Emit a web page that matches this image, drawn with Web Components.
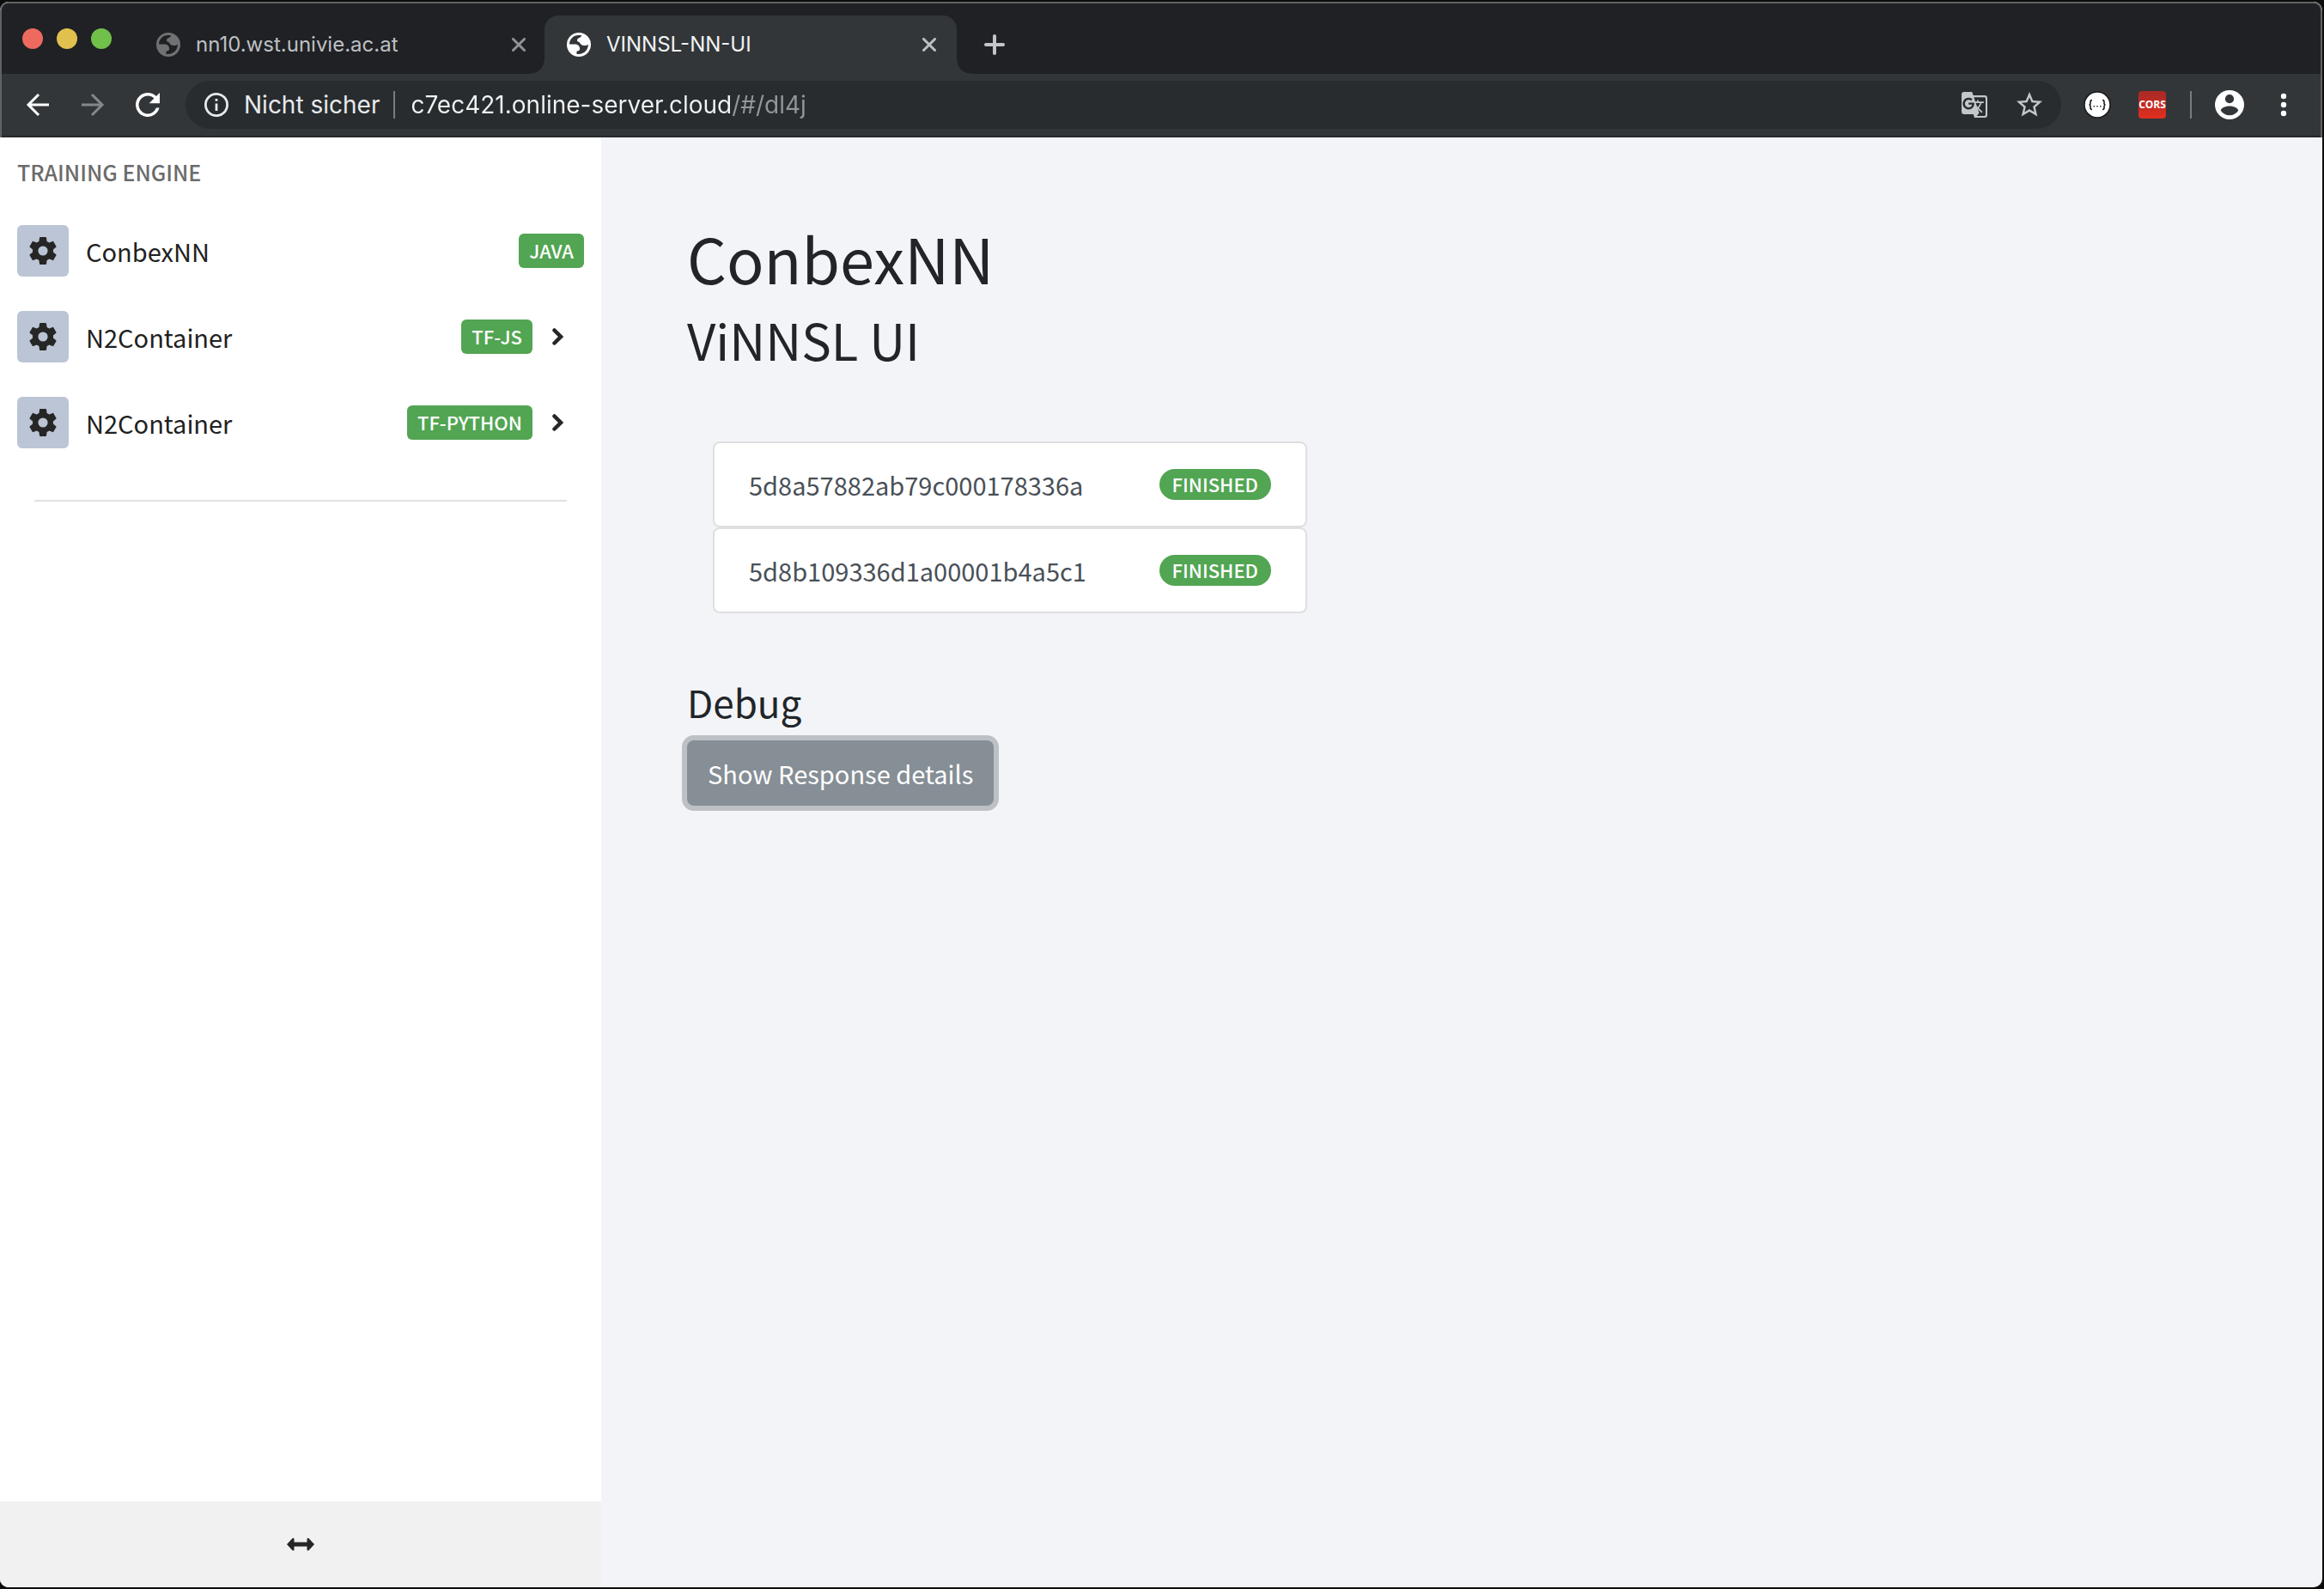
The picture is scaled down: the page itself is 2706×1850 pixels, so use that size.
<!DOCTYPE html>
<html lang="de">
<head>
<meta charset="utf-8">
<title>VINNSL-NN-UI</title>
<style>
  html, body { height: 100%; }
  body { margin: 0; background: #0c0c0c; font-family: "Noto Sans CJK SC", "Noto Sans", sans-serif; color: #212529; }
</style>
</head>
<body>
<browser-window>
  <tab-strip slot="tabs">
    <browser-tab>nn10.wst.univie.ac.at</browser-tab>
    <browser-tab active>VINNSL-NN-UI</browser-tab>
  </tab-strip>
  <tool-bar slot="toolbar"></tool-bar>
  <side-bar>
    <engine-item badge="JAVA">ConbexNN</engine-item>
    <engine-item badge="TF-JS" more>N2Container</engine-item>
    <engine-item badge="TF-PYTHON" more>N2Container</engine-item>
  </side-bar>
  <main-view>
    <job-card status="FINISHED">5d8a57882ab79c000178336a</job-card>
    <job-card status="FINISHED">5d8b109336d1a00001b4a5c1</job-card>
  </main-view>
</browser-window>
<script>
const base = `:host,*{box-sizing:border-box}button{font:inherit;color:inherit;background:none;border:0;padding:0;margin:0;display:grid;place-items:center;flex:none}svg{display:block;flex:none}a{color:inherit;text-decoration:none}`;
function define(name, render) {
  customElements.define(name, class extends HTMLElement {
    connectedCallback() {
      if (this.shadowRoot) return;
      const t = document.createElement('template');
      t.innerHTML = render(this);
      this.attachShadow({ mode: 'open' }).append(t.content.cloneNode(true));
    }
  });
}

define('browser-window', () => `<style>${base}
:host{display:block;height:100%;padding:2px 2px 2px 0}
.frame{height:100%;display:flex;flex-direction:column;border-radius:10px;overflow:hidden;background:#f3f4f8}
.chrome{background:#202124;border:solid #606163;border-width:2px 2px 0 2px;border-radius:10px 10px 0 0}
.page{flex:1;min-height:0;display:flex}
</style><div class="frame"><div class="chrome"><slot name="tabs"></slot><slot name="toolbar"></slot></div><div class="page"><slot></slot></div></div>`);

define('tab-strip', () => `<style>${base}
:host{display:flex;align-items:flex-end;height:82px;padding-left:20px;font-family:Inter,sans-serif}
.lights{display:flex;gap:16px;align-self:flex-start;padding:29px 4px 0}
.lights button{width:24px;height:24px;border-radius:50%}
.tabs{display:flex;padding-left:22px}
.add{width:56px;height:68px;margin-left:16px}
</style><div class="lights"><button aria-label="Close window" style="background:#ee695e"></button><button aria-label="Minimise window" style="background:#e2c04e"></button><button aria-label="Zoom window" style="background:#71c04a"></button></div>
<div class="tabs" role="tablist"><slot></slot></div>
<button class="add" aria-label="New tab"><svg width="24" height="24" viewBox="0 0 24 24" stroke="#c3c5c8" stroke-width="4" stroke-linecap="round"><path d="M12 2v20M2 12h20"/></svg></button>`);

define('browser-tab', el => `<style>${base}
:host{display:block;width:480px;font-size:24px;line-height:32px;color:#bdc0c4;position:relative}
:host([active]){color:#f1f3f4;margin-left:-2px}
.tab{height:68px;display:flex;align-items:center;padding:0 24px 0 26px;border-radius:16px 16px 0 0}
:host([active]) .tab{background:#323639}
.title{flex:1;min-width:0;padding-left:18px;white-space:nowrap}
.globe{color:#6f7173}:host([active]) .globe{color:#fff}
.close{color:#909295}:host([active]) .close{color:#bdc0c3}
:host([active])::before,:host([active])::after{content:"";position:absolute;bottom:0;width:16px;height:16px}
:host([active])::before{right:100%;background:radial-gradient(circle at 0 0,#202124 15px,#323639 16px)}
:host([active])::after{left:100%;background:radial-gradient(circle at 100% 0,#202124 15px,#323639 16px)}
</style><div class="tab" role="tab"><svg class="globe" width="28" height="28" viewBox="0 0 28 28" fill="currentColor" fill-rule="evenodd"><path d="M14 0a14 14 0 1 0 0 28 14 14 0 0 0 0-28zM3 13.500C3 8 7.500 3 13.500 3H17C17 6.500 12 5.500 12 9C12 11.500 15 10 15.500 12.500C16.500 14.500 19 15 20.500 15C22.500 15 24 14.500 25 13.500C25 20 20 25 14 25H11.500V21.500C14.500 21.500 15.500 20 15 18C14.500 14.500 12 13.500 9.500 13.500Z"/></svg>
<span class="title"><slot></slot></span><button class="close" aria-label="Close tab"><svg width="16" height="16" viewBox="0 0 16 16" stroke="currentColor" stroke-width="3" stroke-linecap="round"><path d="M1.500 1.500l13 13M14.500 1.500l-13 13"/></svg></button></div>`);

define('tool-bar', () => `<style>${base}
:host{display:flex;align-items:center;height:74px;padding:0 26px 0 18px;background:#323639;border-bottom:2px solid #26282b;font-family:Inter,sans-serif;font-size:28px;line-height:36px;color:#e8eaed}
.nav{display:flex;gap:16px}.nav button{width:48px;height:48px;color:#fff}.nav .off{color:#85888b}
.box{flex:1;display:flex;align-items:center;height:56px;margin-left:20px;padding:0 22px;border-radius:28px;background:#282c2f}
.sec{display:flex;align-items:center;gap:18px;margin-right:16px;white-space:nowrap}
.bar{width:2px;height:32px;background:#797c7f}
input{flex:1;min-width:0;margin:0 0 0 18px;padding:0;border:0;outline:0;height:40px;font:inherit;color:#f1f3f4;background:linear-gradient(90deg,#f1f3f4 375px,#93979b 0);-webkit-background-clip:text;background-clip:text;-webkit-text-fill-color:transparent}
.in{display:flex;gap:34px}
.ext{display:flex;align-items:center;padding-left:26px}
.cors{width:32px;height:32px;margin:0 28px 0 32px;border-radius:4px;background:linear-gradient(#a92a25,#c52a24 50%,#e0301f);color:#fff;font:700 12px/32px "Open Sans",sans-serif}
.user{margin:0 29px 0 27px}
</style>
<div class="nav"><button aria-label="Back"><svg width="28" height="28" viewBox="0 0 28 28" fill="none" stroke="currentColor" stroke-width="3"><path d="M27 14H3M15 2L3 14l12 12"/></svg></button>
<button class="off" aria-label="Forward"><svg width="28" height="28" viewBox="0 0 28 28" fill="none" stroke="currentColor" stroke-width="3"><path d="M1 14h24M13 2l12 12-12 12"/></svg></button>
<button aria-label="Reload"><svg width="28" height="28" viewBox="4 4 16 16" fill="currentColor"><path d="M17.650 6.350A7.960 7.960 0 0 0 12 4a8 8 0 1 0 7.730 10h-2.080A6 6 0 1 1 12 6c1.660 0 3.140.690 4.220 1.780L13 11h7V4l-2.350 2.350z"/></svg></button></div>
<div class="box"><div class="sec"><svg width="28" height="28" viewBox="2 2 20 20" fill="currentColor"><path d="M11 7h2v2h-2zm0 4h2v6h-2zm1-9a10 10 0 1 0 0 20 10 10 0 0 0 0-20zm0 18a8 8 0 1 1 0-16 8 8 0 0 1 0 16z"/></svg><span>Nicht sicher</span></div><i class="bar"></i>
<input type="text" aria-label="Adresse" value="c7ec421.online-server.cloud/#/dl4j">
<div class="in"><button aria-label="Translate"><svg width="30" height="30" viewBox="1 1 22 22" fill="#c4c7ca"><path d="M21 4H11l-1-3H3c-1.100 0-2 .9-2 2v15c0 1.100.9 2 2 2h8l1 3h9c1.100 0 2-.9 2-2V6c0-1.100-.9-2-2-2zM7 16c-2.760 0-5-2.240-5-5s2.240-5 5-5c1.350 0 2.480.5 3.350 1.300L9.030 8.570c-.38-.36-1.040-.78-2.030-.78-1.740 0-3.150 1.440-3.150 3.210S5.260 14.210 7 14.210c2.010 0 2.840-1.440 2.920-2.410H7v-1.710h4.680c.07.31.12.61.12 1.020C11.800 13.970 9.890 16 7 16zm6.170-5.420h3.700c-.43 1.250-1.110 2.430-2.050 3.470-.31-.35-.6-.72-.86-1.100l-.79-2.370zm8.330 9.920c0 .55-.45 1-1 1H14l2-2.500-1.040-3.100 3.100 3.100.92-.92-3.300-3.250.02-.02c1.130-1.250 1.930-2.690 2.400-4.220H20v-1.300h-4.530V8h-1.290v1.290h-1.440L11.460 5.500h9.040c.55 0 1 .45 1 1v14z"/></svg></button>
<button aria-label="Bookmark"><svg width="30" height="30" viewBox="2 2 20 20" fill="#c4c7ca"><path d="M22 9.240l-7.190-.62L12 2 9.190 8.630 2 9.240l5.460 4.730L5.820 21 12 17.270 18.180 21l-1.630-7.030L22 9.240zM12 15.400l-3.760 2.270 1-4.280-3.320-2.880 4.380-.38L12 6.100l1.710 4.040 4.380.38-3.320 2.880 1 4.280L12 15.400z"/></svg></button></div></div>
<div class="ext"><button aria-label="JSON viewer"><svg width="32" height="32" viewBox="0 0 32 32"><circle cx="16" cy="16" r="15" fill="#fff" stroke="#17191b" stroke-width="1.500"/><path d="M10 10.500q-2 0-2 2v1.500q0 2-1.500 2 1.500 0 1.500 2v1.500q0 2 2 2M22 10.500q2 0 2 2v1.500q0 2 1.500 2-1.500 0-1.500 2v1.500q0 2-2 2" fill="none" stroke="#111" stroke-width="1.500"/><path d="M11.500 17h1.500v1.500h-1.500zM15.250 17h1.500v1.500h-1.500zM19 17h1.500v1.500h-1.500z" fill="#333"/></svg></button>
<button class="cors">CORS</button><i class="bar"></i>
<button class="user" aria-label="Profile"><svg width="34" height="34" viewBox="2 2 20 20" fill="#fff"><path d="M12 2a10 10 0 1 0 0 20 10 10 0 0 0 0-20zm0 3a3 3 0 1 1 0 6 3 3 0 0 1 0-6zm0 14.200a7.200 7.200 0 0 1-6-3.220c.03-1.990 4-3.080 6-3.080s5.970 1.090 6 3.080a7.200 7.200 0 0 1-6 3.220z"/></svg></button>
<button aria-label="Menu"><svg width="34" height="28" viewBox="0 0 34 28" fill="#fff"><circle cx="17" cy="4" r="3.200"/><circle cx="17" cy="14" r="3.200"/><circle cx="17" cy="24" r="3.200"/></svg></button></div>`);

define('side-bar', () => `<style>${base}
:host{flex:none;width:700px;display:flex;flex-direction:column;background:#fff;color:#212121}
h2{margin:0;padding:22px 20px 24px;font-size:25px;line-height:36px;font-weight:500;color:#6b6b6b}
nav{flex:1}
hr{margin:40px 40px 0;border:0;height:2px;background:#e2e2e2}
.toggle{height:100px;background:#f1f1f1}
</style><nav><h2>TRAINING ENGINE</h2><slot></slot><hr></nav>
<button class="toggle" aria-label="Resize sidebar"><svg width="32" height="16" viewBox="0 0 32 16" fill="#262626"><path d="M0 8L6.500 1Q8.500 0 8.500 2V5.500H23.500V2Q23.500 0 25.500 1L32 8L25.500 15Q23.500 16 23.500 14V10.500H8.500V14Q8.500 16 6.500 15Z"/></svg></button>`);

define('engine-item', el => `<style>${base}
:host{display:block}
a{display:flex;align-items:center;height:100px;padding:0 20px;font-size:29px;line-height:40px}
.ico{width:60px;height:60px;border-radius:6px;background:#bcc5d5;display:grid;place-items:center;margin-right:20px}
.name{flex:1}
.go{margin:0 24px 0 22px}
</style><a href="#"><span class="ico"><svg width="32" height="32" viewBox="2 2 20 20" fill="#262626"><path d="M19.430 12.980c.04-.32.07-.64.07-.98s-.03-.66-.07-.98l2.110-1.650c.19-.15.24-.42.12-.64l-2-3.460c-.12-.22-.39-.3-.61-.22l-2.490 1c-.52-.4-1.080-.73-1.690-.98l-.38-2.650C14.460 2.180 14.250 2 14 2h-4c-.25 0-.46.18-.49.42l-.38 2.650c-.61.25-1.170.59-1.690.98l-2.490-1c-.23-.09-.49 0-.61.22l-2 3.460c-.13.22-.07.49.12.64l2.110 1.650c-.04.32-.07.65-.07.98s.03.66.07.98l-2.110 1.650c-.19.15-.24.42-.12.64l2 3.460c.12.22.39.3.61.22l2.490-1c.52.4 1.080.73 1.690.98l.38 2.650c.03.24.24.42.49.42h4c.25 0 .46-.18.49-.42l.38-2.650c.61-.25 1.170-.59 1.690-.98l2.490 1c.23.09.49 0 .61-.22l2-3.460c.12-.22.07-.49-.12-.64l-2.110-1.650zM12 15.500a3.500 3.500 0 1 1 0-7 3.500 3.500 0 0 1 0 7z"/></svg></span>
<span class="name"><slot></slot></span><status-badge>${el.getAttribute('badge')}</status-badge>${el.hasAttribute('more') ? '<svg class="go" width="14" height="20" viewBox="0 0 14 20" fill="none" stroke="#262626" stroke-width="4.500" stroke-linecap="round"><path d="M3.500 2.500L11 10L3.500 17.500"/></svg>' : ''}</a>`);

define('status-badge', () => `<style>${base}
:host{display:block;flex:none;padding:0 12px 2px;border-radius:6px;background:#52a552;color:#fff;font-size:22px;line-height:38px;font-weight:500;white-space:nowrap}
:host([pill]){padding:0 15px 2px;line-height:34px;border-radius:18px}
</style><slot></slot>`);

define('job-card', el => `<style>${base}
:host{display:block}
a{display:flex;align-items:center;justify-content:space-between;height:100px;padding:0 40px;border:2px solid #dfdfdf;border-radius:8px;background:#fff;font-size:29px;line-height:40px;color:#495057}
</style><a href="#"><span><slot></slot></span><status-badge pill>${el.getAttribute('status')}</status-badge></a>`);

define('main-view', () => `<style>${base}
:host{flex:1;min-width:0;padding:96px 100px}
h1,h2,h3{margin:0;font-weight:400}
h1{font-size:72px;line-height:88px}
h2{padding-top:16px;font-size:58px;line-height:70px}
.jobs{width:692px;margin:84px 0 76px 30px}
h3{font-size:44px;line-height:54px}
.show{height:76px;margin-top:18px;padding:0 24px;border-radius:8px;background:#868e96;box-shadow:0 0 0 6px #bdc0c5;color:#fff;font-size:29px;line-height:40px}
</style><h1>ConbexNN</h1><h2>ViNNSL UI</h2><div class="jobs"><slot></slot></div><h3>Debug</h3><button class="show">Show Response details</button>`);
</script>
</body>
</html>
